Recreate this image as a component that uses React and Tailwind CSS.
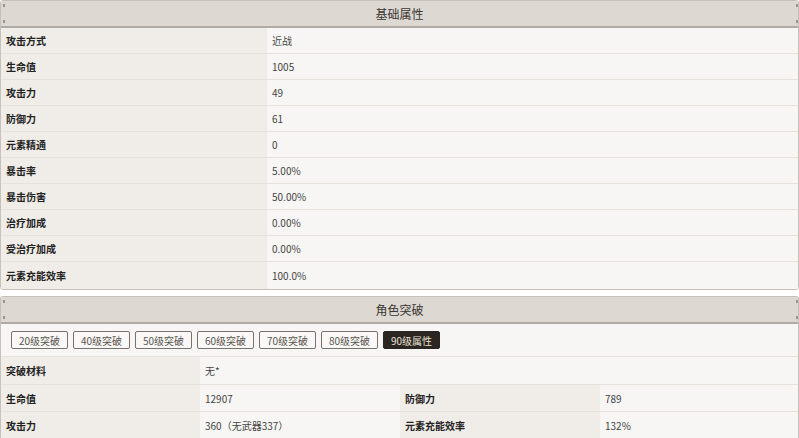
import React from "react";

const basic = [
  ["攻击方式", "近战"],
  ["生命值", "1005"],
  ["攻击力", "49"],
  ["防御力", "61"],
  ["元素精通", "0"],
  ["暴击率", "5.00%"],
  ["暴击伤害", "50.00%"],
  ["治疗加成", "0.00%"],
  ["受治疗加成", "0.00%"],
  ["元素充能效率", "100.0%"],
];

const tabs = ["20级突破", "40级突破", "50级突破", "60级突破", "70级突破", "80级突破", "90级属性"];

function Corner({ side }) {
  return (
    <>
      <span className={`absolute top-[3px] ${side === "l" ? "left-[2px]" : "right-0"} w-[2px] h-[3px] bg-[#9a958e]`} />
      <span className={`absolute bottom-[3px] ${side === "l" ? "left-[2px]" : "right-0"} w-[2px] h-[3px] bg-[#9a958e]`} />
    </>
  );
}

function Header({ title, h }) {
  return (
    <div className={`relative ${h} bg-[#ddd8d1] border-b-2 border-[#b0aba4] flex items-center justify-center text-[12px] text-[#3a3632]`}>
      <Corner side="l" />
      <Corner side="r" />
      {title}
    </div>
  );
}

export default function App() {
  return (
    <div className="w-[799px] h-[438px] bg-white overflow-hidden font-['Noto_Sans_CJK_SC',sans-serif] text-[#333]">
      <section className="border border-[#c6c1ba] rounded-[3px] overflow-hidden">
        <Header title="基础属性" h="h-[27px]" />
        {basic.map(([k, v], i) => (
          <div
            key={k}
            className={`flex ${i < basic.length - 1 ? "h-[26px] border-b border-[#e5e1db]" : "h-[27px]"}`}
          >
            <div className="w-[266px] bg-[#f0ede8] pl-[5px] flex items-center text-[10px] font-bold text-[#222]">{k}</div>
            <div className="flex-1 bg-[#f7f6f4] pl-[5px] flex items-center text-[10px] text-[#444]">{v}</div>
          </div>
        ))}
      </section>
      <section className="mt-[6px] border border-[#c6c1ba] border-b-0 rounded-t-[3px] overflow-hidden">
        <Header title="角色突破" h="h-[27px]" />
        <div className="h-[33px] bg-[#f7f6f4] border-b border-[#e5e1db] flex items-center gap-[5px] pl-[10px]">
          {tabs.map((t, i) => (
            <div
              key={t}
              className={`w-[57px] h-[18px] rounded-[2px] flex items-center justify-center text-[10px] ${
                i === tabs.length - 1
                  ? "bg-[#2b2622] text-[#e9e1d2] border border-[#2b2622]"
                  : "border border-[#77726c] text-[#5a5650] bg-[#f9f8f6]"
              }`}
            >
              {t}
            </div>
          ))}
        </div>
        <div className="flex h-[28px] border-b border-[#e5e1db]">
          <div className="w-[199px] bg-[#f0ede8] pl-[5px] flex items-center text-[10px] font-bold text-[#222]">突破材料</div>
          <div className="flex-1 bg-[#f7f6f4] pl-[5px] flex items-center text-[10px] text-[#444]">无*</div>
        </div>
        {[
          ["生命值", "12907", "防御力", "789"],
          ["攻击力", "360（无武器337）", "元素充能效率", "132%"],
        ].map(([a, b, c, d], i) => (
          <div key={a} className={`flex h-[27px] ${i === 0 ? "border-b border-[#e5e1db]" : ""}`}>
            <div className="w-[199px] bg-[#f0ede8] pl-[5px] flex items-center text-[10px] font-bold text-[#222]">{a}</div>
            <div className="w-[200px] bg-[#f7f6f4] pl-[5px] flex items-center text-[10px] text-[#444]">{b}</div>
            <div className="w-[200px] bg-[#f0ede8] pl-[5px] flex items-center text-[10px] font-bold text-[#222]">{c}</div>
            <div className="flex-1 bg-[#f7f6f4] pl-[5px] flex items-center text-[10px] text-[#444]">{d}</div>
          </div>
        ))}
      </section>
    </div>
  );
}
